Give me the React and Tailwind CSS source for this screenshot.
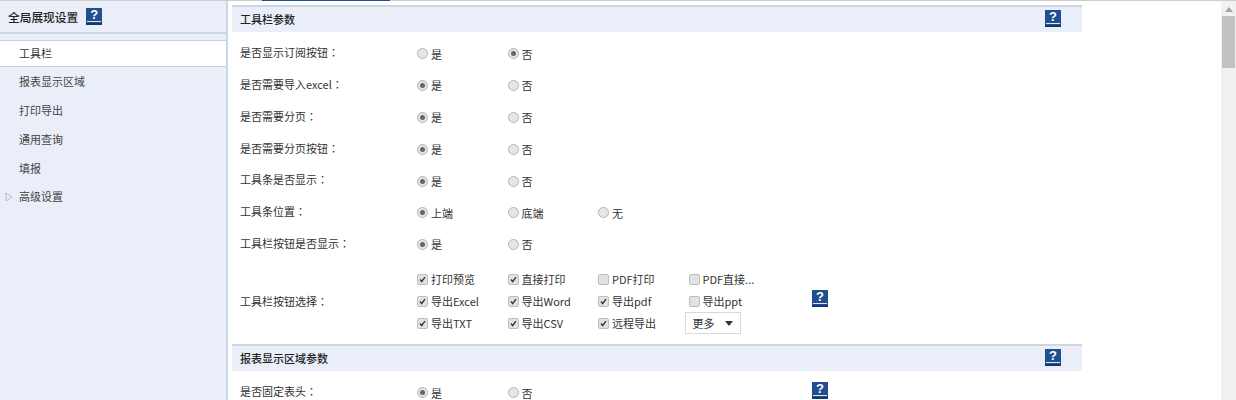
import React from "react";

const font = { fontFamily: '"Noto Sans CJK SC", "Liberation Sans", sans-serif' };

function Help({ className = "" }) {
  return (
    <span className={"relative flex h-[17px] w-[16px] shrink-0 items-start justify-center bg-[#1f4f8f] text-[13px] leading-[14px] font-bold text-white border-b-2 border-b-[#17396a] " + className} style={{ fontFamily: '"Liberation Sans", sans-serif' }}>
      ?
      <span className="absolute bottom-[1px] left-[1px] right-[1px] h-px bg-[#dfe8f3]" />
    </span>
  );
}

function Label({ text }) {
  return (
    <span className="w-[177px] text-[11px] text-[#333]">
      {text}
      <span className="font-['Noto_Sans_CJK_TC']">：</span>
    </span>
  );
}

function Radio({ on, label }) {
  return (
    <span className="mt-[3px] flex w-[90.5px] items-center">
      <span className="flex h-[11px] w-[11px] items-center justify-center rounded-full border border-[#b4b4b4] bg-[#e6e6e6]">
        {on && <span className="h-[5px] w-[5px] rounded-full bg-[#666]" />}
      </span>
      <span className="ml-[3px] text-[11px] text-[#333]">{label}</span>
    </span>
  );
}

function RadioRow({ label, opts, sel, help }) {
  return (
    <div className="flex h-[31.8px] items-center pl-[8px]">
      <Label text={label} />
      {opts.map((o, i) => <Radio key={o} label={o} on={i === sel} />)}
      {help && <Help className="ml-[214px] -mt-[2px]" />}
    </div>
  );
}

function Check({ on, label }) {
  return (
    <span className="flex w-[90.5px] items-center">
      <span className="flex h-[11px] w-[11px] items-center justify-center rounded-[2px] border border-[#bdbdbd] bg-[#e2e2e2]">
        {on && (
          <svg viewBox="0 0 11 11" className="h-[11px] w-[11px]">
            <path d="M2.5 5.5 L4.5 8 L8.5 2.5" fill="none" stroke="#333" strokeWidth="1.7" />
          </svg>
        )}
      </span>
      <span className="ml-[3px] whitespace-nowrap text-[11px] text-[#333]">{label}</span>
    </span>
  );
}

function Section({ title, className = "" }) {
  return (
    <div className={"flex h-[27px] items-start justify-between border-t-2 border-t-[#cdd6e2] bg-[#e9eef8] pl-[8px] pr-[21px] " + className}>
      <span className="text-[11px] leading-[24px] font-medium text-[#222]">{title}</span>
      <Help className="mt-[3px]" />
    </div>
  );
}

const side = ["报表显示区域", "打印导出", "通用查询", "填报"];

export default function App() {
  return (
    <div className="relative flex h-[400px] w-[1236px] border-t border-t-[#cfcfcf] bg-white" style={font}>
      <aside className="flex h-full w-[228px] shrink-0 flex-col border-r-2 border-r-[#c9d6e5] bg-[#e9eef9]">
        <div className="flex h-[33px] items-center border-b-2 border-b-[#cdd6e3] pl-[8px]">
          <span className="text-[11.7px] font-medium text-[#222]">全局展现设置</span>
          <Help className="ml-[8px]" />
        </div>
        <div className="mt-[6px] flex h-[27px] items-center border-y border-y-[#c4d1e2] bg-white pl-[19px] text-[11px] text-[#333]">工具栏</div>
        <div className="flex flex-col">
          {side.map((s) => (
            <div key={s} className="flex h-[28.8px] items-center pl-[19px] text-[11px] text-[#444]">{s}</div>
          ))}
          <div className="flex h-[28.8px] items-center pl-[5px] text-[11px] text-[#444]">
            <svg viewBox="0 0 8 10" className="mr-[6px] h-[10px] w-[8px]">
              <path d="M1 1 L7 5 L1 9 Z" fill="none" stroke="#b5bcc6" />
            </svg>
            高级设置
          </div>
        </div>
      </aside>

      <main className="ml-[4px] h-full w-[850px] shrink-0 overflow-hidden pt-[4px]">
        <Section title="工具栏参数" />
        <div className="pt-[4.5px]">
          <RadioRow label="是否显示订阅按钮" opts={["是", "否"]} sel={1} />
          <RadioRow label="是否需要导入excel" opts={["是", "否"]} sel={0} />
          <RadioRow label="是否需要分页" opts={["是", "否"]} sel={0} />
          <RadioRow label="是否需要分页按钮" opts={["是", "否"]} sel={0} />
          <RadioRow label="工具条是否显示" opts={["是", "否"]} sel={0} />
          <RadioRow label="工具条位置" opts={["上端", "底端", "无"]} sel={0} />
          <RadioRow label="工具栏按钮是否显示" opts={["是", "否"]} sel={0} />
        </div>
        <div className="mt-[9.4px] flex items-center pl-[8px]">
          <Label text="工具栏按钮选择" />
          <div className="w-[395px]">
            <div className="flex h-[22px] items-center">
              <Check on label="打印预览" />
              <Check on label="直接打印" />
              <Check label="PDF打印" />
              <Check label="PDF直接..." />
            </div>
            <div className="flex h-[22px] items-center">
              <Check on label="导出Excel" />
              <Check on label="导出Word" />
              <Check on label="导出pdf" />
              <Check label="导出ppt" />
            </div>
            <div className="flex h-[22px] items-center">
              <Check on label="导出TXT" />
              <Check on label="导出CSV" />
              <Check on label="远程导出" />
              <span className="-ml-[4px] flex h-[22px] w-[56px] items-center justify-center gap-[10px] border border-[#d9d9d9] text-[11px] text-[#333]">
                更多
                <svg viewBox="0 0 8 5" className="h-[5px] w-[8px]"><path d="M0 0 H8 L4 5 Z" fill="#333" /></svg>
              </span>
            </div>
          </div>
          <Help className="-mt-[6px]" />
        </div>
        <Section title="报表显示区域参数" className="mt-[10px]" />
        <div className="pt-[4px]">
          <RadioRow label="是否固定表头" opts={["是", "否"]} sel={0} help />
        </div>
      </main>

      <div className="absolute left-[262px] top-[-1px] h-px w-[128px] bg-[#1f4f8f]" />

      <div className="ml-auto flex h-full w-[15px] shrink-0 flex-col items-center bg-[#f1f1f1]">
        <svg viewBox="0 0 8 5" className="mt-[6px] h-[5px] w-[8px]"><path d="M4 0 L8 5 H0 Z" fill="#a3a3a3" /></svg>
        <div className="mt-[4px] h-[52px] w-[13px] bg-[#c1c1c1]" />
      </div>
    </div>
  );
}
